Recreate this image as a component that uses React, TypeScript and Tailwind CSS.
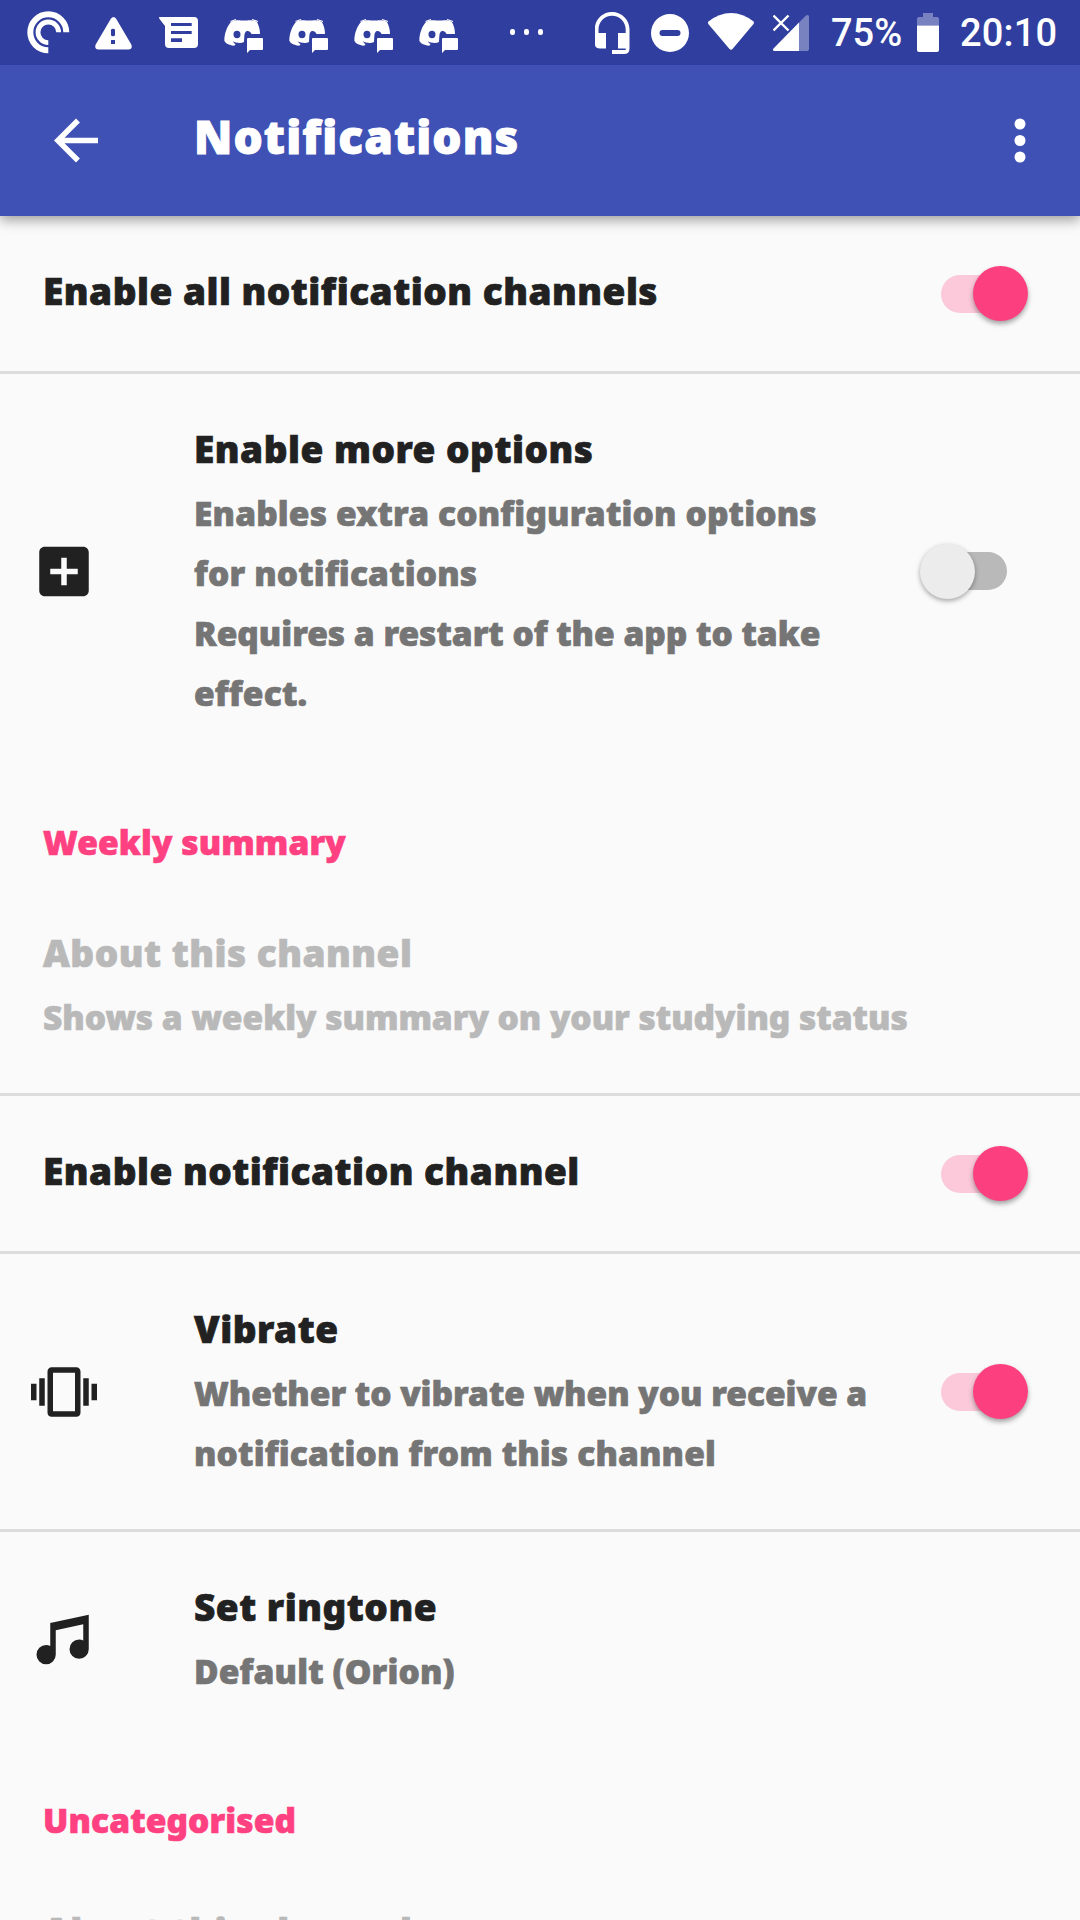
import type { ReactNode } from "react";

function Glyph({ box, className, children }: { box: string; className: string; children: ReactNode }) {
  return (
    <svg viewBox={box} className={`h-[65px] shrink-0 fill-white ${className}`}>
      {children}
    </svg>
  );
}

function ChatGlyph() {
  return (
    <Glyph box="224 0 40 65" className="mr-[25px] w-[40px]">
      <path
        fillRule="evenodd"
        d="M231 22C234 20 238 20 241 20.5L247 20.5C250 20 254 20 257 22C259 26 260 30 260 34L251.500 34C250.500 31.500 248 30.500 246 31.500C244 33 244.500 36 244 42C241 43.600 236 43 232.500 41.300L235.500 44.500C234.500 46 233 46 230.500 45C227 44 225 42.500 224.300 40.500C224.500 33 227 26.500 231 22ZM237 30.800A3.500 3.700 0 1 0 237 38.200A3.500 3.700 0 1 0 237 30.800Z"
      />
      <path d="M230.500 21.500L236 19.500M258 21.500L252 19.500" stroke="white" strokeWidth="1.200" />
      <path d="M248 38H262Q263 38 263 39V49Q263 50 262 50H250L247 53V39Q247 38 248 38Z" />
    </Glyph>
  );
}

function StatusBar() {
  return (
    <div className="flex h-[65px] items-center bg-[#303f9f] pl-[27px] font-['Roboto',sans-serif] text-[38px] font-medium text-white">
      <Glyph box="27 0 43 65" className="mr-[25px] w-[43px]">
        <g fill="none" stroke="white">
          <path d="M66.300 32.300A18 18 0 1 0 48.300 50.300" strokeWidth="6" />
          <path d="M58.600 32.300A10.300 10.300 0 1 0 48.300 42.600" strokeWidth="4.800" />
        </g>
      </Glyph>
      <Glyph box="95 0 37 65" className="mr-[27px] w-[37px]">
        <path
          fillRule="evenodd"
          d="M111 18.500Q113.500 15.500 116 18.500L131.300 44.500Q133 49 128.500 49.500H98.500Q94 49 95.700 44.500ZM111 30Q111 28.700 113 28.700Q115 28.700 115 30V35Q115 36.300 113 36.300Q111 36.300 111 35ZM111 40V44H115V40Z"
        />
      </Glyph>
      <Glyph box="159 0 39 65" className="mr-[26px] w-[39px]">
        <path
          fillRule="evenodd"
          d="M159 17H194Q198 17 198 21V44Q198 48 194 48H169Q165 48 165 44V26L159.500 19ZM171 23V26H191.700V23ZM171 31V34H191.700V31ZM171 38.300V42H182V38.300Z"
        />
      </Glyph>
      <ChatGlyph />
      <ChatGlyph />
      <ChatGlyph />
      <ChatGlyph />
      <Glyph box="509 0 35 65" className="mr-[51px] ml-[25px] w-[35px]">
        <rect x="510" y="29" width="5" height="6" rx="2.200" />
        <rect x="524" y="29" width="5" height="6" rx="2.200" />
        <rect x="538" y="29" width="5" height="6" rx="2.200" />
      </Glyph>
      <Glyph box="595 0 35 65" className="mr-[21px] w-[35px]">
        <path d="M612 12C602 12 594.700 20 594.700 29.500V43Q594.700 48.500 600 48.500H606V33H598.500V29.500C598.500 22 604.500 15.800 612 15.800S625.700 22 625.700 29.500V33H618V48.500H625.700V50H612V54H624Q629.500 54 629.500 48.500V29.500C629.500 20 622 12 612 12Z" />
      </Glyph>
      <Glyph box="651 0 38 65" className="mr-[18px] w-[38px]">
        <path
          fillRule="evenodd"
          d="M670 14A19 19 0 1 0 670 52A19 19 0 1 0 670 14ZM662.500 30H677.500A3 3 0 0 1 677.500 36H662.500A3 3 0 0 1 662.500 30Z"
        />
      </Glyph>
      <Glyph box="707 0 48 65" className="mr-[18px] w-[48px]">
        <path d="M708.500 21.500Q719 13 731 13T753.500 21.500Q754.500 22.500 753.500 24L732.500 49Q731 50.500 729.500 49L708.300 24Q707.300 22.700 708.500 21.500Z" />
      </Glyph>
      <Glyph box="773 0 36 65" className="mr-[22px] w-[36px]">
        <path d="M799 22.500L806 15.500Q809 14 809 17V49Q809 51 807 51H799Z" fillOpacity=".35" />
        <path d="M799 22.500V51H774.500Q772 50.500 773.500 48.500L785.500 36.200Z" />
        <path d="M773.500 15.500L788.500 30.500M788.500 15.500L773.500 30.500" stroke="#303f9f" strokeWidth="5" />
        <path d="M773.500 15.500L788.500 30.500M788.500 15.500L773.500 30.500" stroke="white" strokeWidth="2.400" />
      </Glyph>
      <span className="w-[86px] translate-y-[1px] whitespace-nowrap">75%</span>
      <Glyph box="917 0 22 65" className="mr-[21px] w-[22px]">
        <path d="M923 13H933V17H937Q939 17 939 19V25.500H917V19Q917 17 919 17H923Z" fillOpacity=".35" />
        <path d="M917 25.500H939V50Q939 52 937 52H919Q917 52 917 50Z" />
      </Glyph>
      <span className="translate-y-[1px] whitespace-nowrap tracking-[0.2px]">20:10</span>
    </div>
  );
}

function Toggle({ on }: { on: boolean }) {
  return on ? (
    <div className="relative mr-[52px] flex h-[55px] w-[87px] shrink-0 items-center">
      <div className="h-[38px] w-[75px] rounded-full bg-[#fbc9da]" />
      <div className="absolute right-0 size-[55px] rounded-full bg-[#fc407f] shadow-[0_3px_5px_rgba(0,0,0,0.35)]" />
    </div>
  ) : (
    <div className="relative mr-[73px] flex h-[55px] w-[87px] shrink-0 translate-y-[1px] items-center justify-end">
      <div className="h-[38px] w-[75px] rounded-full bg-[#b9b9b9]" />
      <div className="absolute left-0 size-[55px] rounded-full bg-[#ececec] shadow-[0_2px_5px_rgba(0,0,0,0.35)]" />
    </div>
  );
}

type RowProps = {
  title: string;
  lines?: string[];
  icon?: string;
  toggle?: boolean;
  disabled?: boolean;
  divider?: boolean;
};

function Row({ title, lines = [], icon, toggle, disabled, divider }: RowProps) {
  return (
    <div className={`flex shrink-0 items-center ${divider ? "border-b-[3px] border-[#dcdcdc]" : ""}`}>
      {icon && (
        <svg viewBox="0 0 24 24" className={`ml-[31px] size-[66px] shrink-0 fill-[#212121] ${divider ? "" : "translate-y-[1.5px]"}`}>
          <path d={icon} />
        </svg>
      )}
      <div className={`min-w-0 flex-1 pt-[42px] whitespace-nowrap ${lines.length ? "pb-[43px]" : "pb-[47px]"} ${icon ? "pl-[97px]" : "pl-[43px]"}`}>
        <h2 className={`text-[37px] leading-[66px] tracking-[0.5px] ${disabled ? "text-[#b9b9b9]" : "text-[#212121]"}`}>{title}</h2>
        {lines.length > 0 && (
          <div className={`mt-[1px] ${divider ? "pb-[3px]" : ""}`}>
            {lines.map((line) => (
              <p
                key={line}
                className={`text-[33.5px] leading-[60px] ${line.length > 35 ? "tracking-[-0.02px]" : "tracking-[0.15px]"} ${disabled ? "text-[#b9b9b9]" : "text-[#757575]"}`}
              >
                {line}
              </p>
            ))}
          </div>
        )}
      </div>
      {toggle !== undefined && <Toggle on={toggle} />}
    </div>
  );
}

function Category({ children }: { children: ReactNode }) {
  return <h3 className="h-[112px] shrink-0 pt-[46px] pl-[43px] text-[33.5px] leading-[60px] tracking-[0.1px] text-[#ff4081]">{children}</h3>;
}

const ADD_BOX = "M19 3H5c-1.110 0-2 .9-2 2v14c0 1.100.89 2 2 2h14c1.100 0 2-.9 2-2V5c0-1.100-.9-2-2-2zm-2 10h-4v4h-2v-4H7v-2h4V7h2v4h4v2z";
const VIBRATION =
  "M0 15h2V9H0v6zm3 2h2V7H3v10zm19-8v6h2V9h-2zm-3 8h2V7h-2v10zM16.500 3h-9C6.670 3 6 3.670 6 4.500v15c0 .83.67 1.500 1.500 1.500h9c.83 0 1.500-.67 1.500-1.500v-15c0-.83-.67-1.500-1.500-1.500zM16 19H8V5h8v14z";
const MUSIC =
  "M21 3V15.500A3.500 3.500 0 0 1 17.500 19A3.500 3.500 0 0 1 14 15.500A3.500 3.500 0 0 1 17.500 12C18.040 12 18.550 12.120 19 12.340V6.470L9 8.600V17.500A3.500 3.500 0 0 1 5.500 21A3.500 3.500 0 0 1 2 17.500A3.500 3.500 0 0 1 5.500 14C6.040 14 6.550 14.120 7 14.340V6L21 3Z";

export default function App() {
  return (
    <div className="flex h-[1920px] w-[1080px] flex-col overflow-hidden bg-[#fafafa] font-['Noto_Sans',sans-serif] font-black [font-variant-ligatures:none]">
      <header className="z-10 shrink-0 shadow-[0_4px_12px_rgba(0,0,0,0.38)]">
        <StatusBar />
        <div className="flex h-[151px] items-center bg-[#3f51b5] text-white">
          <svg viewBox="0 0 24 24" className="ml-[42.5px] size-[66px] -translate-y-[0.5px] fill-white">
            <path d="M20 11H7.830l5.590-5.590L12 4l-8 8 8 8 1.410-1.410L7.830 13H20v-2z" />
          </svg>
          <h1 className="-mt-[10px] ml-[85.5px] flex-1 text-[46px] leading-[64px] tracking-[1.1px] [-webkit-text-stroke:1px_white]">Notifications</h1>
          <svg viewBox="0 0 24 24" className="mr-[27px] size-[66px] -translate-y-[0.5px] fill-white">
            <circle cx="12" cy="6" r="2" />
            <circle cx="12" cy="12" r="2" />
            <circle cx="12" cy="18" r="2" />
          </svg>
        </div>
      </header>
      <main className="flex flex-col [-webkit-text-stroke:0.7px_currentColor]">
        <Row title="Enable all notification channels" toggle={true} divider />
        <Row
          title="Enable more options"
          lines={["Enables extra configuration options", "for notifications", "Requires a restart of the app to take", "effect."]}
          icon={ADD_BOX}
          toggle={false}
        />
        <Category>Weekly summary</Category>
        <Row title="About this channel" lines={["Shows a weekly summary on your studying status"]} disabled divider />
        <Row title="Enable notification channel" toggle={true} divider />
        <Row title="Vibrate" lines={["Whether to vibrate when you receive a", "notification from this channel"]} icon={VIBRATION} toggle={true} divider />
        <Row title="Set ringtone" lines={["Default (Orion)"]} icon={MUSIC} />
        <Category>Uncategorised</Category>
        <Row title="About this channel" disabled />
      </main>
    </div>
  );
}
